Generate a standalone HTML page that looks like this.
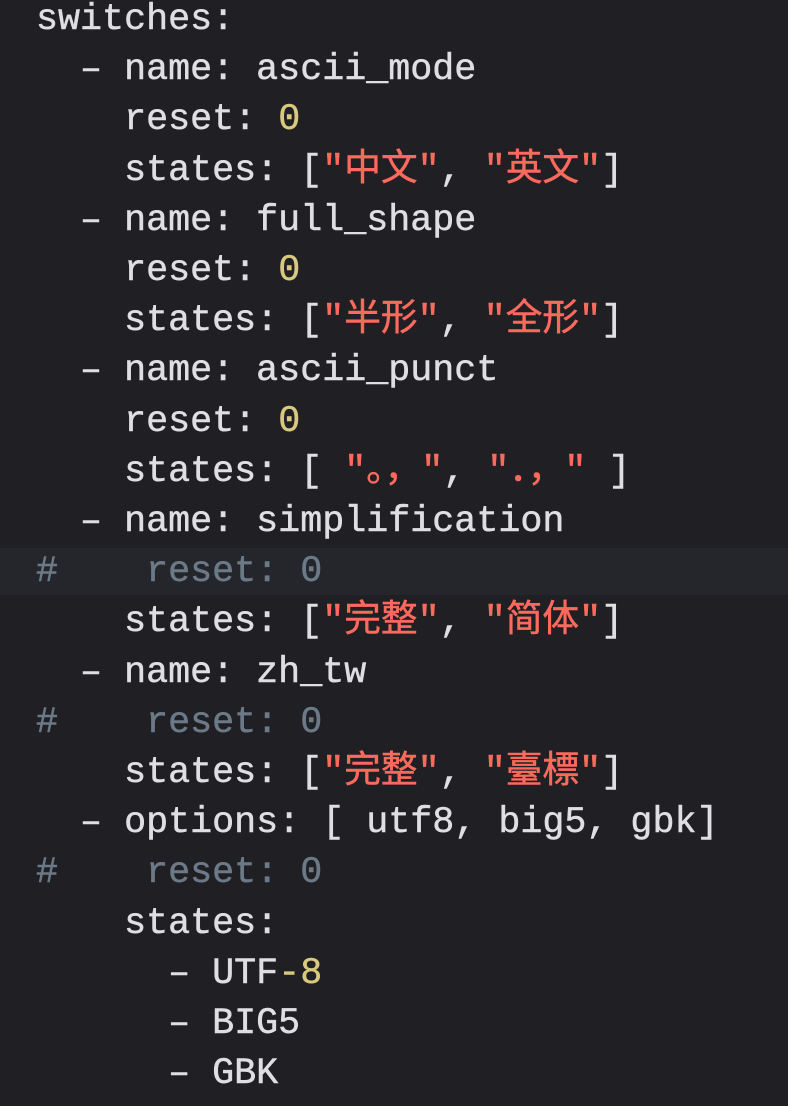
<!DOCTYPE html>
<html><head><meta charset="utf-8"><style>
html,body{margin:0;padding:0;background:#1f1f24;width:788px;height:1106px;overflow:hidden}
pre{margin:0;position:absolute;top:-5px;left:36px;font-family:"Liberation Mono","Noto Sans CJK SC",monospace;font-size:36.7px;line-height:50.2px;color:#dfdfe1;-webkit-text-stroke:0.5px #dfdfe1}
.n{color:#d9c97c;-webkit-text-stroke:0.5px #d9c97c}
.s{color:#fc6a5d;-webkit-text-stroke:0.5px #fc6a5d}
.c{color:#6c7986;-webkit-text-stroke:0.5px #6c7986}
.hl{position:absolute;left:0;top:548px;width:788px;height:47px;background:#24262c}
</style></head><body>
<div class="hl"></div>
<pre>switches:
  – name: ascii_mode
    reset: <span class="n">0</span>
    states: [<span class="s">"中文"</span>, <span class="s">"英文"</span>]
  – name: full_shape
    reset: <span class="n">0</span>
    states: [<span class="s">"半形"</span>, <span class="s">"全形"</span>]
  – name: ascii_punct
    reset: <span class="n">0</span>
    states: [ <span class="s">"。，"</span>, <span class="s">"．，"</span> ]
  – name: simplification
<span class="c">#    reset: 0</span>
    states: [<span class="s">"完整"</span>, <span class="s">"简体"</span>]
  – name: zh_tw
<span class="c">#    reset: 0</span>
    states: [<span class="s">"完整"</span>, <span class="s">"臺標"</span>]
  – options: [ utf8, big5, gbk]
<span class="c">#    reset: 0</span>
    states:
      – UTF<span class="n">-8</span>
      – BIG5
      – GBK
</pre>
</body></html>
